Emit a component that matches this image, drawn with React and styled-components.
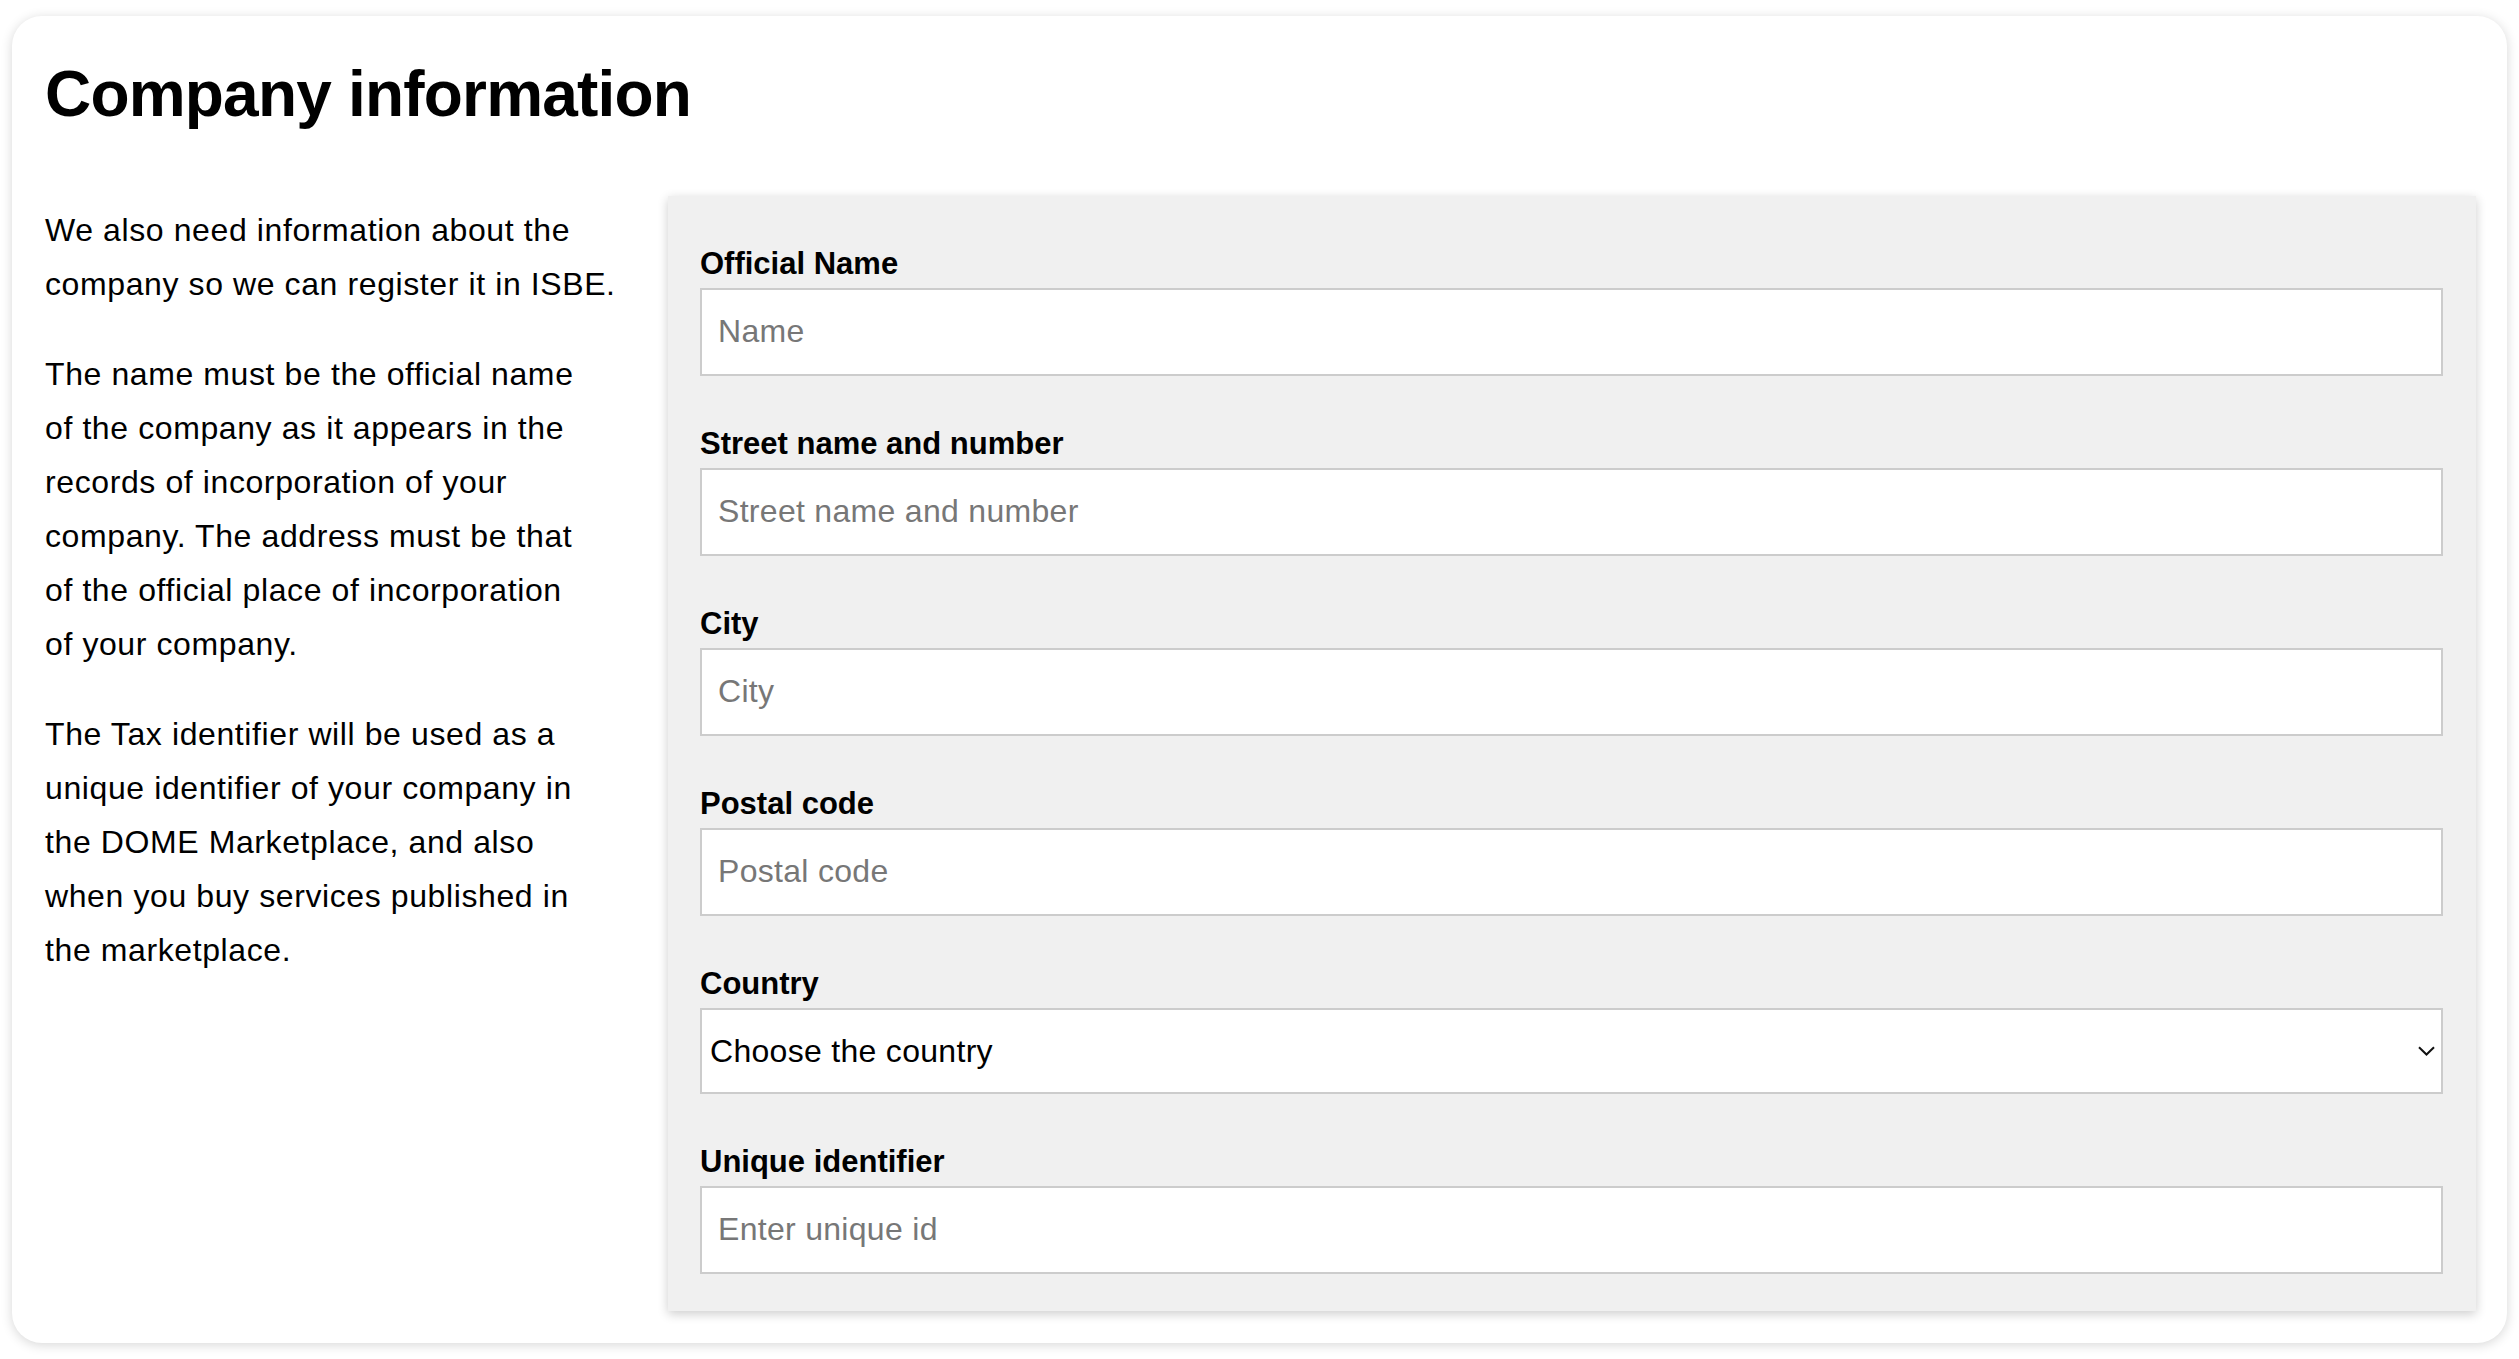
import styled, { createGlobalStyle } from "styled-components";

const GlobalStyle = createGlobalStyle`
  body {
    margin: 0;
    background: #ffffff;
    font-family: "Liberation Sans", Arial, sans-serif;
    color: #000;
  }
`;

const fields = [
  { label: "Official Name", placeholder: "Name" },
  { label: "Street name and number", placeholder: "Street name and number" },
  { label: "City", placeholder: "City" },
  { label: "Postal code", placeholder: "Postal code" },
];

const Chevron = () => (
  <svg width="17" height="10" viewBox="0 0 17 10" fill="none">
    <path d="M1 1.2 L8.5 8.5 L16 1.2" stroke="#111" strokeWidth="2" />
  </svg>
);

const App = () => {
  return (
    <Page>
      <GlobalStyle />
      <Card>
        <Title>Company information</Title>
        <Content>
          <Intro>
            <Paragraph>
              We also need information about the
              <br />
              company so we can register it in ISBE.
            </Paragraph>
            <Paragraph>
              The name must be the official name
              <br />
              of the company as it appears in the
              <br />
              records of incorporation of your
              <br />
              company. The address must be that
              <br />
              of the official place of incorporation
              <br />
              of your company.
            </Paragraph>
            <Paragraph>
              The Tax identifier will be used as a
              <br />
              unique identifier of your company in
              <br />
              the DOME Marketplace, and also
              <br />
              when you buy services published in
              <br />
              the marketplace.
            </Paragraph>
          </Intro>
          <FormPanel>
            {fields.map((f) => (
              <Field key={f.label}>
                <Label>{f.label}</Label>
                <Input type="text" placeholder={f.placeholder} />
              </Field>
            ))}
            <Field>
              <Label>Country</Label>
              <SelectWrap>
                <Select defaultValue="">
                  <option value="">Choose the country</option>
                </Select>
                <Arrow>
                  <Chevron />
                </Arrow>
              </SelectWrap>
            </Field>
            <Field>
              <Label>Unique identifier</Label>
              <Input type="text" placeholder="Enter unique id" />
            </Field>
          </FormPanel>
        </Content>
      </Card>
    </Page>
  );
};

export default App;

const Page = styled.div`
  padding: 16px 12px;
`;

const Card = styled.div`
  background: #fff;
  border-radius: 30px;
  box-shadow: 0 2px 12px rgba(0, 0, 0, 0.16);
  padding: 40px 31px 32px 33px;
`;

const Title = styled.h1`
  margin: 0 0 63px;
  font-size: 64px;
  line-height: 1.2;
  font-weight: 700;
  letter-spacing: -0.8px;
`;

const Content = styled.div`
  display: grid;
  grid-template-columns: 590px 1fr;
  column-gap: 33px;
  align-items: start;
`;

const Intro = styled.div`
  padding-top: 7px;
`;

const Paragraph = styled.p`
  margin: 0 0 36px;
  font-size: 32px;
  line-height: 54px;
  letter-spacing: 0.6px;
  white-space: nowrap;
`;

const FormPanel = styled.div`
  background: #f0f0f0;
  box-shadow: 0 3px 10px rgba(0, 0, 0, 0.2);
  padding: 50px 33px 37px 32px;
  display: flex;
  flex-direction: column;
  gap: 50px;
`;

const Field = styled.div`
  display: flex;
  flex-direction: column;
  gap: 6px;
`;

const Label = styled.label`
  font-size: 31px;
  line-height: 36px;
  font-weight: 700;
`;

const Input = styled.input`
  box-sizing: border-box;
  width: 100%;
  height: 88px;
  border: 2px solid #cccccc;
  background: #fff;
  padding: 0 16px;
  font-family: "Liberation Sans", Arial, sans-serif;
  font-size: 32px;
  letter-spacing: 0.3px;
  color: #000;
  outline: none;

  &::placeholder {
    color: #777777;
  }
`;

const SelectWrap = styled.div`
  position: relative;
`;

const Select = styled.select`
  box-sizing: border-box;
  width: 100%;
  height: 86px;
  border: 2px solid #cccccc;
  border-radius: 0;
  background: #fff;
  padding: 0 40px 0 8px;
  font-family: "Liberation Sans", Arial, sans-serif;
  font-size: 32px;
  letter-spacing: 0.3px;
  color: #000;
  appearance: none;
  outline: none;
`;

const Arrow = styled.span`
  position: absolute;
  right: 8px;
  top: 50%;
  transform: translateY(-50%);
  display: flex;
  pointer-events: none;
`;
